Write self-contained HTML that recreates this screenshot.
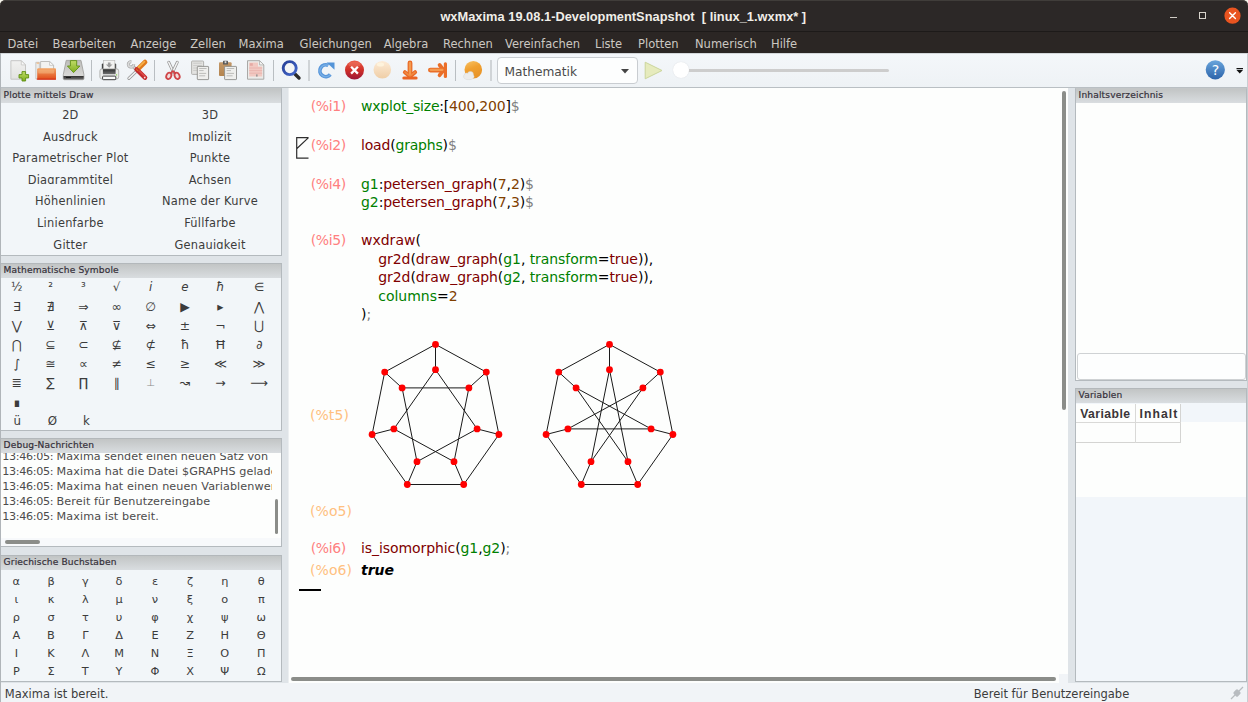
<!DOCTYPE html><html><head><meta charset="utf-8"><title>wxMaxima</title><style>
html,body{margin:0;padding:0}
body{width:1248px;height:702px;overflow:hidden;position:relative;background:#dfe4e8;font-family:"DejaVu Sans", "Liberation Sans", sans-serif;font-size:11.4px;color:#3c3c3c}
.abs,.t{position:absolute}
.t{white-space:pre;line-height:1}
#title{left:0;top:0;width:1248px;height:31px;background:#2c2827;border-radius:5.5px 5.5px 0 0;box-shadow:inset 0 1px 0 #403d3a}
#menubar{left:0;top:31px;width:1248px;height:22px;background:#2b2624;border-top:1px solid #1d1a19;box-sizing:border-box}
#menubar .t{color:#cbc8c2;font-size:11.5px}
#toolbar{left:1px;top:53px;width:1246px;height:34px;background:linear-gradient(#f4f7fa,#eef2f5);border-bottom:1px solid #b9bfc3;box-shadow:inset 0 1px 0 #d3d7da}
.sep{position:absolute;top:7px;width:1px;height:21px;background:#b9bec2}
.hdr{position:absolute;height:15px;background:linear-gradient(#c2c5c5,#d9dde0);font-size:9px;color:#35303a;box-sizing:border-box;border-right:1px solid #b4babe;border-left:1px solid #b4babe;border-top:1px solid #b3b8bb}
.hdr .t{left:2.6px;top:2px;font-size:9.1px;letter-spacing:0.14px;-webkit-text-stroke:0.2px #35303a}
.pane{position:absolute;background:#f2f6f9;border:1px solid #b4babe;border-top:none;box-sizing:border-box}
.code{font-family:"DejaVu Sans","Liberation Sans",sans-serif;font-size:14px}
.v{color:#008000}.f{color:#800000}.n{color:#804000}.e{color:#808080}.o{color:#000}
.pi{color:#ff8080}.po{color:#ffc080}
.sym{position:absolute;white-space:pre;line-height:1;transform:translateX(-50%);color:#3c3c3c}
.btn{position:absolute;overflow:hidden;text-align:center;white-space:pre;color:#3c3c3c;font-size:11.4px;line-height:1}
.thumb{position:absolute;background:#8b8d89;border-radius:2px}
</style></head><body>
<div class="abs" style="left:0;top:0;width:1248px;height:6px;background:#f7f5ec"></div>
<div id="title" class="abs"></div>
<div class="t" style="left:440.4px;top:11px;font-weight:bold;font-size:12.8px;font-family:&quot;Liberation Sans&quot;,sans-serif;letter-spacing:0.03px;color:#f0eee8" id="ttl">wxMaxima 19.08.1-DevelopmentSnapshot  [ linux_1.wxmx* ]</div>
<div class="abs" style="left:1170px;top:17px;width:7px;height:1.2px;background:#cfcbc4"></div>
<div class="abs" style="left:1199px;top:12px;width:7px;height:7px;border:1.3px solid #d8d4cc;box-sizing:border-box"></div>
<svg class="abs" style="left:1224px;top:7px" width="17" height="17" viewBox="0 0 17 17"><circle cx="8.5" cy="8.7" r="8.1" fill="#e95420"/><path d="M5.6 5.8l5.8 5.8M11.4 5.8l-5.8 5.8" stroke="#fff" stroke-width="1.4" stroke-linecap="round"/></svg>
<div id="menubar" class="abs">
<div class="t" style="left:7.4px;top:6.6px">Datei</div>
<div class="t" style="left:52.5px;top:6.6px">Bearbeiten</div>
<div class="t" style="left:130.6px;top:6.6px">Anzeige</div>
<div class="t" style="left:190.2px;top:6.6px">Zellen</div>
<div class="t" style="left:238.6px;top:6.6px">Maxima</div>
<div class="t" style="left:299.6px;top:6.6px">Gleichungen</div>
<div class="t" style="left:383.7px;top:6.6px">Algebra</div>
<div class="t" style="left:443.0px;top:6.6px">Rechnen</div>
<div class="t" style="left:505.0px;top:6.6px">Vereinfachen</div>
<div class="t" style="left:595.0px;top:6.6px">Liste</div>
<div class="t" style="left:638.0px;top:6.6px">Plotten</div>
<div class="t" style="left:695.0px;top:6.6px">Numerisch</div>
<div class="t" style="left:771.0px;top:6.6px">Hilfe</div>
</div>
<div id="toolbar" class="abs">
<div class="sep" style="left:90.0px"></div>
<div class="sep" style="left:153.0px"></div>
<div class="sep" style="left:272.0px"></div>
<div class="sep" style="left:454.0px"></div>
<div class="sep" style="left:307.0px;width:2px;background:#d0d4d7"></div>
<div class="sep" style="left:489.0px;width:2px;background:#d0d4d7"></div>
<svg class="abs" style="left:0;top:0" width="500" height="34" viewBox="1 53 500 34">
<defs>
<linearGradient id="gPaper" x1="0" y1="0" x2="0" y2="1"><stop offset="0" stop-color="#f1f1f0"/><stop offset="1" stop-color="#e2e2e0"/></linearGradient>
<linearGradient id="gGreen" x1="0" y1="0" x2="0" y2="1"><stop offset="0" stop-color="#c0dc68"/><stop offset="1" stop-color="#7eae1c"/></linearGradient>
<linearGradient id="gFolder" x1="0" y1="0" x2="0" y2="1"><stop offset="0" stop-color="#f2a566"/><stop offset="1" stop-color="#e04a18"/></linearGradient>
<linearGradient id="gDrive" x1="0" y1="0" x2="0" y2="1"><stop offset="0" stop-color="#bdbdbb"/><stop offset="1" stop-color="#e0e0de"/></linearGradient>
<linearGradient id="gDark" x1="0" y1="0" x2="0" y2="1"><stop offset="0" stop-color="#2e2e2e"/><stop offset="1" stop-color="#707070"/></linearGradient>
<linearGradient id="gRed" x1="0" y1="0" x2="0" y2="1"><stop offset="0" stop-color="#ea5a48"/><stop offset="0.5" stop-color="#cf2f28"/><stop offset="1" stop-color="#9c1838"/></linearGradient>
<linearGradient id="gPeach" x1="0" y1="0" x2="0" y2="1"><stop offset="0" stop-color="#fdebd6"/><stop offset="1" stop-color="#efcea6"/></linearGradient>
<linearGradient id="gOr" x1="0" y1="0" x2="0" y2="1"><stop offset="0" stop-color="#f39a4a"/><stop offset="1" stop-color="#e85a1c"/></linearGradient>
<linearGradient id="gSun" x1="0" y1="0" x2="0.4" y2="1"><stop offset="0" stop-color="#f8c468"/><stop offset="0.5" stop-color="#f0a030"/><stop offset="1" stop-color="#e89428"/></linearGradient>
<linearGradient id="gBlue" x1="0" y1="0" x2="0" y2="1"><stop offset="0" stop-color="#6aa6e0"/><stop offset="1" stop-color="#4a88d0"/></linearGradient>
<linearGradient id="gRing" x1="0" y1="0" x2="1" y2="1"><stop offset="0" stop-color="#263f96"/><stop offset="1" stop-color="#4468cc"/></linearGradient>
<linearGradient id="gClip" x1="0" y1="0" x2="0" y2="1"><stop offset="0" stop-color="#c39868"/><stop offset="1" stop-color="#b4844e"/></linearGradient>
</defs>
<!-- new document -->
<path d="M10.9 60.7H21.3L25.5 64.9V79.2H10.9Z" fill="url(#gPaper)" stroke="#c6c6c4" stroke-width="1"/>
<path d="M21.3 60.7V64.9H25.5Z" fill="#fafafa" stroke="#c6c6c4" stroke-width="0.8"/>
<path d="M22 71.6h3.6v3h3v3.4h-3v3h-3.6v-3h-3v-3.4h3z" fill="url(#gGreen)" stroke="#5f8f14" stroke-width="0.9" stroke-linejoin="round"/>
<!-- open folder -->
<path d="M35.8 62.3h3.6v16.5h-3.6z" fill="#ececea" stroke="#c0c0be" stroke-width="0.8"/>
<path d="M40.6 61.5H49.6L53.6 65.3V75H40.6Z" fill="#f2f2f1" stroke="#b8b8b6" stroke-width="0.9"/>
<path d="M49.6 61.5V65.3H53.6Z" fill="#fff" stroke="#b8b8b6" stroke-width="0.7"/>
<rect x="37.2" y="68.2" width="18.8" height="11.4" rx="1" fill="url(#gFolder)"/><rect x="38.2" y="69.6" width="16" height="4" rx="1" fill="#f7c08c" opacity="0.45"/>
<rect x="36.8" y="78.6" width="19.2" height="1.1" fill="#d2301a"/>
<rect x="36.6" y="62.6" width="2.6" height="1" fill="#f4b070"/>
<!-- save drive -->
<path d="M66.2 60.4H81L83.9 74.5V78.6Q83.9 79.7 82.8 79.7H64.4Q63.3 79.7 63.3 78.6V74.5Z" fill="url(#gDrive)" stroke="#9a9a98" stroke-width="0.8"/>
<path d="M63.5 76H83.7V78.6Q83.7 79.5 82.8 79.5H64.4Q63.5 79.5 63.5 78.6Z" fill="url(#gDark)"/>
<rect x="66" y="77" width="5" height="1" fill="#1a1a1a"/>
<path d="M70.4 60.6H76.7V66H79.9L73.55 72.6L67.4 66H70.4Z" fill="url(#gGreen)" stroke="#5f8f14" stroke-width="0.9" stroke-linejoin="round"/>
<!-- printer -->
<rect x="101.8" y="63.4" width="14.4" height="8" rx="1.2" fill="#444"/>
<rect x="103.6" y="60.6" width="11.2" height="8.8" fill="#f3f3f2" stroke="#bdbdbb" stroke-width="0.7"/>
<path d="M107.9 62.6h2.6v2h2l-3.3 3.2l-3.3-3.2h2z" fill="#9c9c9c"/>
<rect x="99.9" y="68.9" width="18.8" height="10.1" rx="2" fill="#ebebe9" stroke="#a4a4a2" stroke-width="0.8"/>
<rect x="102.9" y="69.2" width="12.7" height="5" fill="url(#gDark)"/>
<rect x="102.6" y="76.1" width="13.2" height="3.6" rx="0.8" fill="#fafafa" stroke="#3e3e3e" stroke-width="1"/>
<rect x="116.1" y="74.2" width="1" height="1.4" fill="#7ed04a"/>
<!-- tools -->
<g>
<path d="M131.8 65.4L137 70.2" stroke="#9e9e9e" stroke-width="3.2"/>
<path d="M131.8 65.4L137 70.2" stroke="#d9d9d9" stroke-width="2"/>
<path d="M133.7 64.3A2.7 2.7 0 1 1 131.3 61.7" fill="none" stroke="#a4a4a4" stroke-width="3"/>
<path d="M133.7 64.3A2.7 2.7 0 1 1 131.3 61.7" fill="none" stroke="#dadada" stroke-width="1.8"/>
<path d="M137.3 70.4L128.9 78.4" stroke="#909090" stroke-width="3" stroke-linecap="round"/>
<path d="M137.3 70.4L128.9 78.4" stroke="#efefef" stroke-width="1.6" stroke-linecap="round"/>
<path d="M136.6 69.4L145 77.6" stroke="#c22a2e" stroke-width="4.6" stroke-linecap="round"/>
<path d="M138.4 70.2L145.4 76.8" stroke="#dc4a48" stroke-width="1.6" stroke-linecap="round"/>
<circle cx="144.7" cy="77.6" r="0.9" fill="#f6dede"/>
<path d="M145 62.1L138.4 68.6" stroke="#e07a1c" stroke-width="4.8" stroke-linecap="round"/>
<path d="M144.4 61.6L138 67.8" stroke="#f6b048" stroke-width="1.8" stroke-linecap="round"/>
<path d="M136.4 67.4L139.6 70.6" stroke="#c8342c" stroke-width="1.8"/>
</g>
<!-- scissors -->
<path d="M168.7 62.2L173.6 72.6" stroke="#959595" stroke-width="2.9" stroke-linecap="round"/>
<path d="M168.7 62.2L173.6 72.6" stroke="#f4f4f4" stroke-width="1.5" stroke-linecap="round"/>
<path d="M177.3 62.2L172.4 72.6" stroke="#959595" stroke-width="2.9" stroke-linecap="round"/>
<path d="M177.3 62.2L172.4 72.6" stroke="#f4f4f4" stroke-width="1.5" stroke-linecap="round"/>
<ellipse cx="168.8" cy="75.9" rx="2.4" ry="3.3" transform="rotate(24 168.8 75.9)" fill="#f1dcdc" stroke="#cf4548" stroke-width="1.8"/>
<ellipse cx="177.1" cy="75.9" rx="2.4" ry="3.3" transform="rotate(-24 177.1 75.9)" fill="#f1dcdc" stroke="#cf4548" stroke-width="1.8"/>
<path d="M170.8 73L173 71.2L175.2 73" stroke="#cf4548" stroke-width="1.8" fill="none"/>
<!-- copy -->
<rect x="191.6" y="61" width="12" height="13.4" rx="0.8" fill="#e3e3e1" stroke="#ababa9" stroke-width="0.9"/>
<path d="M193.2 63.2h8.6M193.2 65.6h8.6M193.2 68h4M193.2 70.4h4" stroke="#c4c4c2" stroke-width="0.8"/>
<rect x="197.3" y="66.4" width="11.3" height="13.2" rx="0.6" fill="#efefed" stroke="#8e8e8c" stroke-width="0.9"/>
<path d="M199.2 68.5h7.4M199.2 70.6h4.4M199.2 73.4h7M199.2 75.8h6" stroke="#aeaeac" stroke-width="0.8"/>
<!-- paste -->
<rect x="219" y="62.2" width="12.6" height="13.8" rx="1" fill="url(#gClip)"/>
<rect x="223" y="60.7" width="5" height="3.9" rx="0.6" fill="#585858"/>
<rect x="224.6" y="61.2" width="1.8" height="2" fill="#d8d8d8"/>
<rect x="224.6" y="66.4" width="11.9" height="13.2" rx="0.6" fill="#efefed" stroke="#8e8e8c" stroke-width="0.9"/>
<path d="M226.6 68.5h7.6M226.6 70.6h4.4M226.6 73.4h7.4M226.6 75.8h6" stroke="#aeaeac" stroke-width="0.8"/>
<!-- text doc -->
<path d="M247.5 60.7H259.6L263.8 64.9V79.2H247.5Z" fill="#ececea" stroke="#a9a9a7" stroke-width="1"/>
<path d="M259.6 60.7V64.9H263.8Z" fill="#fafafa" stroke="#a9a9a7" stroke-width="0.8"/>
<path d="M249.2 62.5H258V66.4H262.2V76.4H249.2Z" fill="#f1c9c2"/>
<path d="M249.2 68h13M249.2 70.6h13M249.2 73.2h13" stroke="#e8b0aa" stroke-width="0.8"/>
<rect x="249.8" y="63.2" width="3" height="2.6" fill="#e5aaa4"/>
<rect x="256.2" y="74.4" width="1.3" height="2.2" fill="#8a8a8a"/>
<!-- find -->
<path d="M294.4 73.6L299 78" stroke="#2b2b2b" stroke-width="3.4" stroke-linecap="round"/>
<circle cx="289.7" cy="68.1" r="6.5" fill="#f4f5f5" stroke="url(#gRing)" stroke-width="2.9"/>
<!-- refresh -->
<path d="M330.3 74.6A5.9 5.9 0 1 1 328.3 65.4" fill="none" stroke="#5896da" stroke-width="3.8"/>
<path d="M330.3 74.6A5.9 5.9 0 1 1 328.3 65.4" fill="none" stroke="#7ab0e6" stroke-width="1.4"/>
<path d="M326.6 62.4H334.5V69.8Z" fill="#5494d8"/>
<!-- stop -->
<circle cx="354.5" cy="70.1" r="9.5" fill="url(#gRed)"/>
<ellipse cx="354.5" cy="64.4" rx="6" ry="3" fill="#f08068" opacity="0.45"/>
<path d="M351.1 66.8L357.9 73.6M357.9 66.8L351.1 73.6" stroke="#fff" stroke-width="2.3"/>
<!-- ball -->
<circle cx="382.3" cy="69.8" r="8.8" fill="url(#gPeach)"/>
<ellipse cx="380.5" cy="64.6" rx="3.6" ry="2" fill="#fff6e0" opacity="0.8"/>
<!-- arrow down to bar -->
<g fill="none" stroke-linecap="round" stroke-linejoin="round">
<path d="M410 63V76" stroke="#e96a26" stroke-width="4.8"/>
<path d="M404.9 72.2L410 76.4L415.1 72.2" stroke="#e96a26" stroke-width="4"/>
<path d="M410 63V75.4" stroke="#f39a4e" stroke-width="2.4"/>
<path d="M405 72.2L410 76.2L415 72.2" stroke="#f18a42" stroke-width="1.6"/>
</g>
<rect x="402.3" y="76.5" width="15.3" height="3.1" rx="1.5" fill="#ea6424"/>
<!-- arrow right to bar -->
<g fill="none" stroke-linecap="round" stroke-linejoin="round">
<path d="M430.4 70.1H443" stroke="#ea6e28" stroke-width="4.8"/>
<path d="M439.6 65L443.6 70.1L439.6 75.2" stroke="#ea6e28" stroke-width="3.8"/>
<path d="M430.6 69.8H442.6" stroke="#f39a50" stroke-width="2.2"/>
</g>
<rect x="443.8" y="62.3" width="3.2" height="15.7" rx="1.5" fill="#ec6e28"/>
<!-- sun & cloud -->
<circle cx="473.3" cy="69.7" r="8.8" fill="url(#gSun)"/>
<g fill="#ececeb" stroke="#d4d4d2" stroke-width="0.5">
<ellipse cx="468.8" cy="76.6" rx="5.3" ry="3.1"/>
<circle cx="470.4" cy="74.4" r="3"/>
<circle cx="466.4" cy="75.4" r="2.3"/>
</g>
<ellipse cx="468.8" cy="76.4" rx="4.6" ry="2.6" fill="#ececeb"/>
</svg>

<div class="abs" style="left:495.5px;top:4px;width:141px;height:27px;box-sizing:border-box;border:1px solid #c9cdd1;border-radius:4px;background:#fdfefe"></div>
<div class="t" style="left:503.5px;top:12.6px;font-size:12.2px;color:#4a4a4a" id="math">Mathematik</div>
<svg class="abs" style="left:619px;top:15px" width="10" height="6"><path d="M1 1h8l-4 4.4z" fill="#444"/></svg>
<svg class="abs" style="left:643px;top:8px" width="20" height="19"><path d="M1.2 1.2L18 9.5L1.2 17.8z" fill="#e6ebbd" stroke="#cbd69c" stroke-width="1"/></svg>
<div class="abs" style="left:685px;top:15.5px;width:203px;height:3px;background:#cdcdcd;border-radius:1.5px"></div>
<div class="abs" style="left:672px;top:9px;width:16px;height:16px;border-radius:8px;background:#fff;box-shadow:0 0 1px #d0d4d8"></div>
<svg class="abs" style="left:1204px;top:6px" width="21" height="22" viewBox="0 0 21 22"><defs><linearGradient id="hg" x1="0" y1="0" x2="0" y2="1"><stop offset="0" stop-color="#6aa5dc"/><stop offset="1" stop-color="#2c64aa"/></linearGradient></defs><circle cx="10.3" cy="10.8" r="9.6" fill="url(#hg)"/><text x="10.4" y="16.2" text-anchor="middle" font-family="DejaVu Sans,Liberation Sans,sans-serif" font-size="14.2" fill="#fff">?</text></svg>
<svg class="abs" style="left:1235px;top:14px" width="8" height="8"><path d="M0.5 1h6.5v1.2h-6.5zM0.5 3h6.5l-3.25 3.6z" fill="#111"/></svg>
</div>
<div class="hdr" style="left:0px;top:88px;width:282px;border-top-color:#c3c6c7"><div class="t">Plotte mittels Draw</div></div>
<div class="pane" style="left:0;top:103px;width:282px;height:153px"></div>
<div class="btn" style="left:0.4px;top:107px;width:140px;height:12.4px;letter-spacing:0.25px"><span style="position:relative;top:3.3px">2D</span></div>
<div class="btn" style="left:140.0px;top:107px;width:140px;height:12.4px;letter-spacing:0.25px"><span style="position:relative;top:3.3px">3D</span></div>
<div class="btn" style="left:0.4px;top:129px;width:140px;height:12.4px;letter-spacing:0.25px"><span style="position:relative;top:3.3px">Ausdruck</span></div>
<div class="btn" style="left:140.0px;top:129px;width:140px;height:12.4px;letter-spacing:0.25px"><span style="position:relative;top:3.3px">Implizit</span></div>
<div class="btn" style="left:0.4px;top:150px;width:140px;height:12.4px;letter-spacing:0.25px"><span style="position:relative;top:3.3px">Parametrischer Plot</span></div>
<div class="btn" style="left:140.0px;top:150px;width:140px;height:12.4px;letter-spacing:0.25px"><span style="position:relative;top:3.3px">Punkte</span></div>
<div class="btn" style="left:0.4px;top:172px;width:140px;height:12.4px;letter-spacing:0.25px"><span style="position:relative;top:3.3px">Diagrammtitel</span></div>
<div class="btn" style="left:140.0px;top:172px;width:140px;height:12.4px;letter-spacing:0.25px"><span style="position:relative;top:3.3px">Achsen</span></div>
<div class="btn" style="left:0.4px;top:193px;width:140px;height:12.4px;letter-spacing:0.25px"><span style="position:relative;top:3.3px">Höhenlinien</span></div>
<div class="btn" style="left:140.0px;top:193px;width:140px;height:12.4px;letter-spacing:0.25px"><span style="position:relative;top:3.3px">Name der Kurve</span></div>
<div class="btn" style="left:0.4px;top:215px;width:140px;height:12.4px;letter-spacing:0.25px"><span style="position:relative;top:3.3px">Linienfarbe</span></div>
<div class="btn" style="left:140.0px;top:215px;width:140px;height:12.4px;letter-spacing:0.25px"><span style="position:relative;top:3.3px">Füllfarbe</span></div>
<div class="btn" style="left:0.4px;top:237px;width:140px;height:12.4px;letter-spacing:0.25px"><span style="position:relative;top:3.3px">Gitter</span></div>
<div class="btn" style="left:140.0px;top:237px;width:140px;height:12.4px;letter-spacing:0.25px"><span style="position:relative;top:3.3px">Genauigkeit</span></div>
<div class="hdr" style="left:0px;top:263px;width:282px"><div class="t">Mathematische Symbole</div></div>
<div class="pane" style="left:0;top:278px;width:282px;height:153px"></div>
<div class="sym" style="left:16.8px;top:282.1px;font-size:11.8px">½</div>
<div class="sym" style="left:50.5px;top:282.1px;font-size:11.8px">²</div>
<div class="sym" style="left:83.4px;top:282.1px;font-size:11.8px">³</div>
<div class="sym" style="left:116.6px;top:282.1px;font-size:11.8px">√</div>
<div class="sym" style="left:150.7px;top:282.1px;font-size:11.8px"><i>i</i></div>
<div class="sym" style="left:185.0px;top:282.1px;font-size:11.8px"><i>e</i></div>
<div class="sym" style="left:220.4px;top:282.1px;font-size:11.8px"><i>ħ</i></div>
<div class="sym" style="left:259.1px;top:282.1px;font-size:11.8px">∈</div>
<div class="sym" style="left:16.8px;top:300.8px;font-size:12.4px">∃</div>
<div class="sym" style="left:50.5px;top:300.8px;font-size:12.4px">∄</div>
<div class="sym" style="left:83.4px;top:300.8px;font-size:12.4px">⇒</div>
<div class="sym" style="left:116.6px;top:300.8px;font-size:12.4px">∞</div>
<div class="sym" style="left:150.7px;top:300.8px;font-size:12.4px">∅</div>
<div class="sym" style="left:185.0px;top:300.8px;font-size:12.4px">▶</div>
<div class="sym" style="left:220.4px;top:300.8px;font-size:12.4px">▸</div>
<div class="sym" style="left:259.1px;top:300.8px;font-size:12.4px">⋀</div>
<div class="sym" style="left:16.8px;top:319.8px;font-size:12.4px">⋁</div>
<div class="sym" style="left:50.5px;top:319.8px;font-size:12.4px">⊻</div>
<div class="sym" style="left:83.4px;top:319.8px;font-size:12.4px">⊼</div>
<div class="sym" style="left:116.6px;top:319.8px;font-size:12.4px">⊽</div>
<div class="sym" style="left:150.7px;top:319.8px;font-size:12.4px">⇔</div>
<div class="sym" style="left:185.0px;top:319.8px;font-size:12.4px">±</div>
<div class="sym" style="left:220.4px;top:319.8px;font-size:12.4px">¬</div>
<div class="sym" style="left:259.1px;top:319.8px;font-size:12.4px">⋃</div>
<div class="sym" style="left:16.8px;top:338.8px;font-size:12.4px">⋂</div>
<div class="sym" style="left:50.5px;top:338.8px;font-size:12.4px">⊆</div>
<div class="sym" style="left:83.4px;top:338.8px;font-size:12.4px">⊂</div>
<div class="sym" style="left:116.6px;top:338.8px;font-size:12.4px">⊈</div>
<div class="sym" style="left:150.7px;top:338.8px;font-size:12.4px">⊄</div>
<div class="sym" style="left:185.0px;top:338.8px;font-size:12.4px">ħ</div>
<div class="sym" style="left:220.4px;top:338.8px;font-size:12.4px">Ħ</div>
<div class="sym" style="left:259.1px;top:338.8px;font-size:12.4px">∂</div>
<div class="sym" style="left:16.8px;top:357.8px;font-size:12.4px">∫</div>
<div class="sym" style="left:50.5px;top:357.8px;font-size:12.4px">≅</div>
<div class="sym" style="left:83.4px;top:357.8px;font-size:12.4px">∝</div>
<div class="sym" style="left:116.6px;top:357.8px;font-size:12.4px">≠</div>
<div class="sym" style="left:150.7px;top:357.8px;font-size:12.4px">≤</div>
<div class="sym" style="left:185.0px;top:357.8px;font-size:12.4px">≥</div>
<div class="sym" style="left:220.4px;top:357.8px;font-size:12.4px">≪</div>
<div class="sym" style="left:259.1px;top:357.8px;font-size:12.4px">≫</div>
<div class="sym" style="left:16.8px;top:376.8px;font-size:12.4px">≣</div>
<div class="sym" style="left:50.5px;top:376.8px;font-size:12.4px">∑</div>
<div class="sym" style="left:83.4px;top:376.8px;font-size:12.4px">∏</div>
<div class="sym" style="left:116.6px;top:376.8px;font-size:12.4px">∥</div>
<div class="sym" style="left:150.7px;top:376.8px;font-size:12.4px"><span style="font-size:10px;color:#8a8a8a;position:relative;top:-0.5px">⊥</span></div>
<div class="sym" style="left:185.0px;top:376.8px;font-size:12.4px">↝</div>
<div class="sym" style="left:220.4px;top:376.8px;font-size:12.4px">→</div>
<div class="sym" style="left:259.1px;top:376.8px;font-size:12.4px">⟶</div>
<div class="sym" style="left:16.8px;top:395.8px;font-size:12.4px"><span style="font-size:8.5px;position:relative;top:0.5px;display:inline-block;transform:scaleX(1.35)">▮</span></div>
<div class="sym" style="left:17.2px;top:416.1px;font-size:11.8px">ü</div>
<div class="sym" style="left:52.5px;top:416.1px;font-size:11.8px">Ø</div>
<div class="sym" style="left:86.3px;top:416.1px;font-size:11.8px">k</div>
<div class="hdr" style="left:0px;top:438px;width:282px"><div class="t">Debug-Nachrichten</div></div>
<div class="pane" style="left:0;top:453px;width:282px;height:94px;background:#f7f9fb"></div>
<div class="abs" style="left:1px;top:453px;width:280px;height:85px;background:#fdfefd"></div>
<div class="abs" style="left:1px;top:453px;width:270.6px;height:85px;overflow:hidden;font-size:11.2px;color:#4c4c4c">
<div class="t" style="left:1.2px;top:-1.7px;letter-spacing:0.02px"><span style="letter-spacing:-0.32px">13:46:05: </span>Maxima sendet einen neuen Satz von Befehlen</div>
<div class="t" style="left:1.2px;top:13.1px;letter-spacing:0.09px"><span style="letter-spacing:-0.32px">13:46:05: </span>Maxima hat die Datei $GRAPHS geladen</div>
<div class="t" style="left:1.2px;top:27.9px;letter-spacing:0.09px"><span style="letter-spacing:-0.32px">13:46:05: </span>Maxima hat einen neuen Variablenwert</div>
<div class="t" style="left:1.2px;top:42.7px;letter-spacing:0.09px"><span style="letter-spacing:-0.32px">13:46:05: </span>Bereit für Benutzereingabe</div>
<div class="t" style="left:1.2px;top:57.5px;letter-spacing:0.09px"><span style="letter-spacing:-0.32px">13:46:05: </span>Maxima ist bereit.</div>
</div>
<div class="thumb" style="left:274.8px;top:499px;width:3.4px;height:35px"></div>
<div class="thumb" style="left:4.8px;top:540px;width:35.6px;height:3.6px"></div>
<div class="hdr" style="left:0px;top:555px;width:282px"><div class="t">Griechische Buchstaben</div></div>
<div class="pane" style="left:0;top:570px;width:282px;height:112px"></div>
<div class="sym" style="left:16.3px;top:575.6px;font-size:11.3px">α</div>
<div class="sym" style="left:51.0px;top:575.6px;font-size:11.3px">β</div>
<div class="sym" style="left:85.3px;top:575.6px;font-size:11.3px">γ</div>
<div class="sym" style="left:119.0px;top:575.6px;font-size:11.3px">δ</div>
<div class="sym" style="left:155.0px;top:575.6px;font-size:11.3px">ε</div>
<div class="sym" style="left:190.0px;top:575.6px;font-size:11.3px">ζ</div>
<div class="sym" style="left:224.8px;top:575.6px;font-size:11.3px">η</div>
<div class="sym" style="left:261.3px;top:575.6px;font-size:11.3px">θ</div>
<div class="sym" style="left:16.3px;top:593.6px;font-size:11.3px">ι</div>
<div class="sym" style="left:51.0px;top:593.6px;font-size:11.3px">κ</div>
<div class="sym" style="left:85.3px;top:593.6px;font-size:11.3px">λ</div>
<div class="sym" style="left:119.0px;top:593.6px;font-size:11.3px">μ</div>
<div class="sym" style="left:155.0px;top:593.6px;font-size:11.3px">ν</div>
<div class="sym" style="left:190.0px;top:593.6px;font-size:11.3px">ξ</div>
<div class="sym" style="left:224.8px;top:593.6px;font-size:11.3px">ο</div>
<div class="sym" style="left:261.3px;top:593.6px;font-size:11.3px">π</div>
<div class="sym" style="left:16.3px;top:611.6px;font-size:11.3px">ρ</div>
<div class="sym" style="left:51.0px;top:611.6px;font-size:11.3px">σ</div>
<div class="sym" style="left:85.3px;top:611.6px;font-size:11.3px">τ</div>
<div class="sym" style="left:119.0px;top:611.6px;font-size:11.3px">υ</div>
<div class="sym" style="left:155.0px;top:611.6px;font-size:11.3px">φ</div>
<div class="sym" style="left:190.0px;top:611.6px;font-size:11.3px">χ</div>
<div class="sym" style="left:224.8px;top:611.6px;font-size:11.3px">ψ</div>
<div class="sym" style="left:261.3px;top:611.6px;font-size:11.3px">ω</div>
<div class="sym" style="left:16.3px;top:629.6px;font-size:11.3px">Α</div>
<div class="sym" style="left:51.0px;top:629.6px;font-size:11.3px">Β</div>
<div class="sym" style="left:85.3px;top:629.6px;font-size:11.3px">Γ</div>
<div class="sym" style="left:119.0px;top:629.6px;font-size:11.3px">Δ</div>
<div class="sym" style="left:155.0px;top:629.6px;font-size:11.3px">Ε</div>
<div class="sym" style="left:190.0px;top:629.6px;font-size:11.3px">Ζ</div>
<div class="sym" style="left:224.8px;top:629.6px;font-size:11.3px">Η</div>
<div class="sym" style="left:261.3px;top:629.6px;font-size:11.3px">Θ</div>
<div class="sym" style="left:16.3px;top:647.6px;font-size:11.3px">Ι</div>
<div class="sym" style="left:51.0px;top:647.6px;font-size:11.3px">Κ</div>
<div class="sym" style="left:85.3px;top:647.6px;font-size:11.3px">Λ</div>
<div class="sym" style="left:119.0px;top:647.6px;font-size:11.3px">Μ</div>
<div class="sym" style="left:155.0px;top:647.6px;font-size:11.3px">Ν</div>
<div class="sym" style="left:190.0px;top:647.6px;font-size:11.3px">Ξ</div>
<div class="sym" style="left:224.8px;top:647.6px;font-size:11.3px">Ο</div>
<div class="sym" style="left:261.3px;top:647.6px;font-size:11.3px">Π</div>
<div class="sym" style="left:16.3px;top:665.6px;font-size:11.3px">Ρ</div>
<div class="sym" style="left:51.0px;top:665.6px;font-size:11.3px">Σ</div>
<div class="sym" style="left:85.3px;top:665.6px;font-size:11.3px">Τ</div>
<div class="sym" style="left:119.0px;top:665.6px;font-size:11.3px">Υ</div>
<div class="sym" style="left:155.0px;top:665.6px;font-size:11.3px">Φ</div>
<div class="sym" style="left:190.0px;top:665.6px;font-size:11.3px">Χ</div>
<div class="sym" style="left:224.8px;top:665.6px;font-size:11.3px">Ψ</div>
<div class="sym" style="left:261.3px;top:665.6px;font-size:11.3px">Ω</div>
<div class="abs" style="left:288px;top:88px;width:780px;height:595px;background:#fdfefd;border-left:1px solid #eceff1;box-sizing:border-box"></div>
<div class="abs" style="left:1059px;top:674px;width:9px;height:9px;background:#f1f4f7"></div>
<div class="thumb" style="left:1061.6px;top:90.5px;width:4.2px;height:319.5px"></div>
<div class="thumb" style="left:291px;top:677.3px;width:765px;height:3.8px"></div>
<div class="t code" style="left:310.8px;top:99.0px;letter-spacing:-0.420px"><span class="pi">(%i1)</span></div>
<div class="t code" id="c1" style="left:361.0px;top:99.0px;letter-spacing:-0.220px"><span class="v">wxplot_size</span><span class="o">:[</span><span class="n">400</span><span class="o">,</span><span class="n">200</span><span class="o">]</span><span class="e">$</span></div>
<div class="t code" style="left:310.8px;top:137.9px;letter-spacing:-0.420px"><span class="pi">(%i2)</span></div>
<div class="t code" id="c2" style="left:361.0px;top:137.9px;letter-spacing:-0.190px"><span class="f">load</span><span class="o">(</span><span class="v">graphs</span><span class="o">)</span><span class="e">$</span></div>
<div class="t code" style="left:310.8px;top:177.1px;letter-spacing:-0.420px"><span class="pi">(%i4)</span></div>
<div class="t code" id="c3" style="left:361.0px;top:177.1px;letter-spacing:-0.080px"><span class="v">g1</span><span class="o">:</span><span class="f">petersen_graph</span><span class="o">(</span><span class="n">7</span><span class="o">,</span><span class="n">2</span><span class="o">)</span><span class="e">$</span></div>
<div class="t code" id="c4" style="left:361.0px;top:195.3px;letter-spacing:-0.080px"><span class="v">g2</span><span class="o">:</span><span class="f">petersen_graph</span><span class="o">(</span><span class="n">7</span><span class="o">,</span><span class="n">3</span><span class="o">)</span><span class="e">$</span></div>
<div class="t code" style="left:310.8px;top:233.3px;letter-spacing:-0.420px"><span class="pi">(%i5)</span></div>
<div class="t code" id="c5" style="left:361.0px;top:233.3px;letter-spacing:0.000px"><span class="f">wxdraw</span><span class="o">(</span></div>
<div class="t code" id="c6" style="left:378.2px;top:251.8px;letter-spacing:-0.064px"><span class="f">gr2d</span><span class="o">(</span><span class="f">draw_graph</span><span class="o">(</span><span class="v">g1</span><span class="o">, </span><span class="v">transform</span><span class="o">=</span><span class="f">true</span><span class="o">)),</span></div>
<div class="t code" id="c7" style="left:378.2px;top:270.3px;letter-spacing:-0.064px"><span class="f">gr2d</span><span class="o">(</span><span class="f">draw_graph</span><span class="o">(</span><span class="v">g2</span><span class="o">, </span><span class="v">transform</span><span class="o">=</span><span class="f">true</span><span class="o">)),</span></div>
<div class="t code" id="c8" style="left:378.2px;top:288.5px;letter-spacing:0.000px"><span class="v">columns</span><span class="o">=</span><span class="n">2</span></div>
<div class="t code" id="c9" style="left:361.0px;top:306.7px;letter-spacing:0.000px"><span class="o">)</span><span class="e">;</span></div>
<div class="t code" style="left:309.9px;top:407.6px;letter-spacing:0.100px"><span class="po">(%t5)</span></div>
<div class="t code" style="left:309.9px;top:504.4px;letter-spacing:0.120px"><span class="po">(%o5)</span></div>
<div class="t code" style="left:310.8px;top:541.0px;letter-spacing:-0.420px"><span class="pi">(%i6)</span></div>
<div class="t code" id="c10" style="left:361.0px;top:541.0px;letter-spacing:-0.085px"><span class="f">is_isomorphic</span><span class="o">(</span><span class="v">g1</span><span class="o">,</span><span class="v">g2</span><span class="o">)</span><span class="e">;</span></div>
<div class="t code" style="left:309.9px;top:563.2px;letter-spacing:0.120px"><span class="po">(%o6)</span></div>
<div class="t code" id="c11" style="left:361px;top:563.2px;font-weight:bold;font-style:italic;color:#000">true</div>
<svg class="abs" style="left:294px;top:134px" width="18" height="28"><path d="M14.5 3.6H2.7V24.2H14.5M14.5 3.6L2.7 14.8" fill="none" stroke="#2e2e2e" stroke-width="1.2"/></svg>
<div class="abs" style="left:299px;top:589px;width:21.5px;height:1.6px;background:#000"></div>
<svg class="abs" style="left:0;top:0" width="1248" height="702"><path d="M435.5 344.4L486.3 372.1M435.5 344.4L435.5 369.7M435.5 369.7L477.1 428.9M486.3 372.1L498.9 434.5M486.3 372.1L468.9 387.9M468.9 387.9L454.0 461.7M498.9 434.5L463.7 484.5M498.9 434.5L477.1 428.9M477.1 428.9L417.0 461.7M463.7 484.5L407.3 484.5M463.7 484.5L454.0 461.7M454.0 461.7L393.9 428.9M407.3 484.5L372.1 434.5M407.3 484.5L417.0 461.7M417.0 461.7L402.1 387.9M372.1 434.5L384.7 372.1M372.1 434.5L393.9 428.9M393.9 428.9L435.5 369.7M384.7 372.1L435.5 344.4M384.7 372.1L402.1 387.9M402.1 387.9L468.9 387.9" stroke="#1a1a1a" stroke-width="1" fill="none"/><circle cx="435.5" cy="344.4" r="3.4" fill="#f00"/><circle cx="486.3" cy="372.1" r="3.4" fill="#f00"/><circle cx="498.9" cy="434.5" r="3.4" fill="#f00"/><circle cx="463.7" cy="484.5" r="3.4" fill="#f00"/><circle cx="407.3" cy="484.5" r="3.4" fill="#f00"/><circle cx="372.1" cy="434.5" r="3.4" fill="#f00"/><circle cx="384.7" cy="372.1" r="3.4" fill="#f00"/><circle cx="435.5" cy="369.7" r="3.4" fill="#f00"/><circle cx="468.9" cy="387.9" r="3.4" fill="#f00"/><circle cx="477.1" cy="428.9" r="3.4" fill="#f00"/><circle cx="454.0" cy="461.7" r="3.4" fill="#f00"/><circle cx="417.0" cy="461.7" r="3.4" fill="#f00"/><circle cx="393.9" cy="428.9" r="3.4" fill="#f00"/><circle cx="402.1" cy="387.9" r="3.4" fill="#f00"/><path d="M609.5 344.4L660.3 372.1M609.5 344.4L609.5 369.7M609.5 369.7L628.0 461.7M660.3 372.1L672.9 434.5M660.3 372.1L642.9 387.9M642.9 387.9L591.0 461.7M672.9 434.5L637.7 484.5M672.9 434.5L651.1 428.9M651.1 428.9L567.9 428.9M637.7 484.5L581.3 484.5M637.7 484.5L628.0 461.7M628.0 461.7L576.1 387.9M581.3 484.5L546.1 434.5M581.3 484.5L591.0 461.7M591.0 461.7L609.5 369.7M546.1 434.5L558.7 372.1M546.1 434.5L567.9 428.9M567.9 428.9L642.9 387.9M558.7 372.1L609.5 344.4M558.7 372.1L576.1 387.9M576.1 387.9L651.1 428.9" stroke="#1a1a1a" stroke-width="1" fill="none"/><circle cx="609.5" cy="344.4" r="3.4" fill="#f00"/><circle cx="660.3" cy="372.1" r="3.4" fill="#f00"/><circle cx="672.9" cy="434.5" r="3.4" fill="#f00"/><circle cx="637.7" cy="484.5" r="3.4" fill="#f00"/><circle cx="581.3" cy="484.5" r="3.4" fill="#f00"/><circle cx="546.1" cy="434.5" r="3.4" fill="#f00"/><circle cx="558.7" cy="372.1" r="3.4" fill="#f00"/><circle cx="609.5" cy="369.7" r="3.4" fill="#f00"/><circle cx="642.9" cy="387.9" r="3.4" fill="#f00"/><circle cx="651.1" cy="428.9" r="3.4" fill="#f00"/><circle cx="628.0" cy="461.7" r="3.4" fill="#f00"/><circle cx="591.0" cy="461.7" r="3.4" fill="#f00"/><circle cx="567.9" cy="428.9" r="3.4" fill="#f00"/><circle cx="576.1" cy="387.9" r="3.4" fill="#f00"/></svg>
<div class="hdr" style="left:1075px;top:88px;width:172px;border-top-color:#c3c6c7"><div class="t">Inhaltsverzeichnis</div></div>
<div class="pane" style="left:1075px;top:103px;width:172px;height:278px;background:#fdfefd"></div>
<div class="abs" style="left:1077px;top:352.5px;width:169px;height:27px;box-sizing:border-box;border:1px solid #cfd2d4;border-radius:3px;background:#fdfefe"></div>
<div class="hdr" style="left:1075px;top:388px;width:172px"><div class="t">Variablen</div></div>
<div class="pane" style="left:1075px;top:403px;width:172px;height:279px;background:#f2f6fa"></div>
<div class="abs" style="left:1076px;top:422px;width:170px;height:75px;background:#fdfefd"></div>
<div class="abs" style="left:1076px;top:404px;width:105px;height:39px;background:#fdfefd;border-right:1px solid #d4d4d2;border-bottom:1px solid #d4d4d2;box-sizing:border-box"></div>
<div class="abs" style="left:1076px;top:422px;width:105px;height:1px;background:#d9d9d7"></div>
<div class="abs" style="left:1134.5px;top:404px;width:1px;height:39px;background:#d9d9d7"></div>
<div class="t" id="gv" style="left:1080.2px;top:407.6px;font-weight:bold;font-size:12.2px;letter-spacing:0.45px;font-family:&quot;Liberation Sans&quot;,sans-serif;color:#3a3538">Variable</div>
<div class="t" id="gi" style="left:1139.6px;top:407.6px;font-weight:bold;font-size:12.2px;letter-spacing:1.05px;font-family:&quot;Liberation Sans&quot;,sans-serif;color:#3a3538">Inhalt</div>
<div class="abs" style="left:0;top:683px;width:1248px;height:19px;background:#f1f4f7"></div>
<div class="t" id="st1" style="left:4.8px;top:688.9px;font-size:11.5px;color:#3c3c3c">Maxima ist bereit.</div>
<div class="t" id="st2" style="left:973.7px;top:688.9px;font-size:11.5px;color:#3c3c3c">Bereit für Benutzereingabe</div>
<svg class="abs" style="left:1229px;top:685px" width="16" height="16"><path d="M2 14L14 2" stroke="#b8bcc0" stroke-width="1.2"/><rect x="5" y="5" width="6" height="6" rx="1.5" transform="rotate(45 8 8)" fill="#b8bcc0"/></svg>
<div class="abs" style="left:0;top:53px;width:1px;height:649px;background:#b0b5b9"></div>
<div class="abs" style="left:1247px;top:53px;width:1px;height:649px;background:#c9ced2"></div>
</body></html>
